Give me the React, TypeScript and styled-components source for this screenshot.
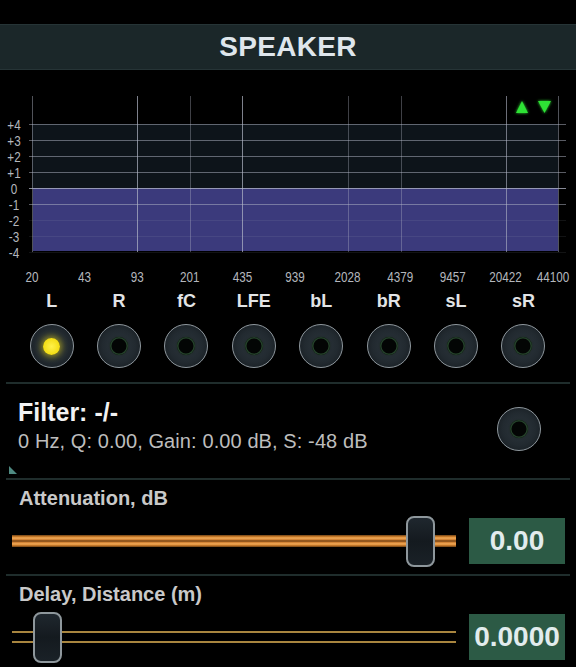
import React from "react";
import styled, { createGlobalStyle } from "styled-components";

const GlobalStyle = createGlobalStyle`
  html, body {
    margin: 0;
    padding: 0;
    background: #000;
  }
  body {
    font-family: "Liberation Sans", Arial, sans-serif;
    color: #ddd;
  }
`;

const CHANNELS = ["L", "R", "fC", "LFE", "bL", "bR", "sL", "sR"];
const FREQS = ["20", "43", "93", "201", "435", "939", "2028", "4379", "9457", "20422", "44100"];
const LEVELS = ["+4", "+3", "+2", "+1", "0", "-1", "-2", "-3", "-4"];
const VLINES = [
  { x: 32, o: 0.45 },
  { x: 137, o: 0.7 },
  { x: 190, o: 0.35 },
  { x: 242, o: 0.7 },
  { x: 348, o: 0.35 },
  { x: 401, o: 0.35 },
  { x: 506, o: 0.6 },
  { x: 558, o: 0.45 },
];

// the axis font in the app is a narrow one, squeeze the regular face
const NARROW = 0.78;

const Label = ({ x, y, children }: { x: number; y: number; children: string }) => (
  <AxisText transform={`translate(${x} ${y}) scale(${NARROW} 1)`} textAnchor="middle">
    {children}
  </AxisText>
);

const EqChart = () => {
  const rowY = (i: number) => 54 + i * 16;
  return (
    <ChartSvg width={576} height={220} viewBox="0 0 576 220">
      <defs>
        <filter id="glow" x="-50%" y="-50%" width="200%" height="200%">
          <feGaussianBlur stdDeviation="1.6" result="b" />
          <feMerge>
            <feMergeNode in="b" />
            <feMergeNode in="SourceGraphic" />
          </feMerge>
        </filter>
      </defs>
      <rect x={32} y={54} width={526} height={64} fill="#0d141a" />
      <rect x={33} y={118} width={525} height={63} fill="#3b3a7c" />
      {VLINES.map((l) => (
        <line key={l.x} x1={l.x + 0.5} x2={l.x + 0.5} y1={26} y2={182} stroke="#b4b8c8" strokeOpacity={l.o} />
      ))}
      {LEVELS.map((lv, i) => (
        <line
          key={lv}
          x1={29}
          x2={566}
          y1={rowY(i) + 0.5}
          y2={rowY(i) + 0.5}
          stroke="#b4b8c8"
          strokeOpacity={i === 4 ? 0.75 : i > 5 ? 0.1 : 0.5}
        />
      ))}
      {LEVELS.map((lv, i) => (
        <Label key={lv} x={14} y={rowY(i) + 5.5}>
          {lv}
        </Label>
      ))}
      {FREQS.map((f, i) => (
        <Label key={f} x={i === 10 ? 553 : 32 + i * 52.6} y={211.5}>
          {f}
        </Label>
      ))}
      <g fill="#2ee234" filter="url(#glow)">
        <polygon points="516,43 528,43 522,31" />
        <polygon points="538,31 551,31 544.5,43" />
      </g>
    </ChartSvg>
  );
};

const Knob = ({ active }: { active?: boolean }) => (
  <KnobRing>
    <KnobCore $active={active} />
  </KnobRing>
);

type SliderProps = {
  label: string;
  value: string;
  pos: number;
  bright?: boolean;
};

const SliderBlock = ({ label, value, pos, bright }: SliderProps) => (
  <Section>
    <SliderLabel>{label}</SliderLabel>
    <SliderRow>
      <Track $bright={bright}>
        <Thumb style={{ left: `${pos * 100}%` }} />
      </Track>
      <ValueBox>{value}</ValueBox>
    </SliderRow>
  </Section>
);

export default function App() {
  return (
    <>
      <GlobalStyle />
      <Page>
        <Header>SPEAKER</Header>
        <EqChart />
        <ChannelGrid>
          {CHANNELS.map((c, i) => (
            <Channel key={c}>
              <ChannelName>{c}</ChannelName>
              <Knob active={i === 0} />
            </Channel>
          ))}
        </ChannelGrid>
        <Divider $top={14} />
        <FilterSection>
          <FilterText>
            <FilterTitle>Filter: -/-</FilterTitle>
            <FilterInfo>0 Hz, Q: 0.00, Gain: 0.00 dB, S: -48 dB</FilterInfo>
            <Corner />
          </FilterText>
          <FilterKnob>
            <Knob />
          </FilterKnob>
        </FilterSection>
        <Divider $top={0} />
        <SliderBlock label="Attenuation, dB" value="0.00" pos={394 / 444} bright />
        <Divider $top={5} />
        <SliderBlock label="Delay, Distance (m)" value="0.0000" pos={21 / 444} />
      </Page>
    </>
  );
}

const Page = styled.div`
  width: 576px;
  height: 667px;
  overflow: hidden;
  padding-top: 24px;
  box-sizing: border-box;
  background: #000;
`;

const Header = styled.div`
  height: 46px;
  box-sizing: border-box;
  display: flex;
  align-items: center;
  justify-content: center;
  background: #1b2729;
  border-top: 1px solid #263436;
  border-bottom: 1px solid #263436;
  color: #dfe6ec;
  font-size: 28px;
  font-weight: bold;
  letter-spacing: 0.3px;
`;

const ChartSvg = styled.svg`
  display: block;
`;

const AxisText = styled.text`
  font-family: "Liberation Sans", Arial, sans-serif;
  font-size: 15px;
  fill: #b4b7bd;
`;

const ChannelGrid = styled.div`
  display: grid;
  grid-template-columns: repeat(8, 67.4px);
  padding-left: 18px;
`;

const Channel = styled.div`
  display: flex;
  flex-direction: column;
  align-items: center;
  gap: 12px;
`;

const ChannelName = styled.div`
  font-size: 18px;
  line-height: 22px;
  font-weight: bold;
  color: #e2e4e6;
`;

const KnobRing = styled.div`
  width: 44px;
  height: 44px;
  box-sizing: border-box;
  border-radius: 50%;
  border: 1.5px solid #8f989e;
  background: radial-gradient(circle at 50% 50%, #2c353c 0%, #222a30 55%, #12171b 100%);
  display: flex;
  align-items: center;
  justify-content: center;
  box-shadow: 0 0 2px rgba(0, 0, 0, 0.8);
`;

const KnobCore = styled.div<{ $active?: boolean }>`
  width: ${(p) => (p.$active ? "17px" : "18px")};
  height: ${(p) => (p.$active ? "17px" : "18px")};
  border-radius: 50%;
  background: ${(p) =>
    p.$active ? "radial-gradient(circle, #fff14a 0%, #f2dc12 70%, #d8c010 100%)" : "#030504"};
  box-shadow: ${(p) =>
    p.$active ? "0 0 6px 2px rgba(240, 220, 20, 0.55)" : "inset 0 0 0 1.5px #24402a, 0 0 2px #1a2a1c"};
`;

const Divider = styled.div<{ $top: number }>`
  margin: ${(p) => p.$top}px 6px 0 6px;
  height: 2px;
  background: #1f2d2c;
`;

const FilterSection = styled.div`
  height: 94px;
  display: flex;
  justify-content: space-between;
  align-items: flex-start;
  padding: 0 35px 0 0;
`;

const FilterText = styled.div`
  display: flex;
  flex-direction: column;
  padding-top: 13px;
  padding-left: 18px;
  height: 100%;
  box-sizing: border-box;
`;

const FilterTitle = styled.div`
  font-size: 25px;
  line-height: 30px;
  font-weight: bold;
  color: #f2f2f2;
`;

const FilterInfo = styled.div`
  margin-top: 2px;
  font-size: 20px;
  line-height: 24px;
  letter-spacing: 0.1px;
  color: #bdbdbd;
`;

const Corner = styled.div`
  margin: 13px 0 0 -9px;
  width: 0;
  height: 0;
  border-bottom: 8px solid #4f8a82;
  border-right: 8px solid transparent;
`;

const FilterKnob = styled.div`
  margin-top: 23px;
`;

const Section = styled.div`
  padding-top: 6px;
`;

const SliderLabel = styled.div`
  padding-left: 19px;
  font-size: 20px;
  line-height: 24px;
  font-weight: bold;
  color: #c9c9c9;
`;

const SliderRow = styled.div`
  margin-top: 3px;
  height: 56px;
  display: flex;
  align-items: center;
  gap: 13px;
  padding-left: 12px;
`;

const Track = styled.div<{ $bright?: boolean }>`
  position: relative;
  width: 444px;
  height: 12px;
  box-sizing: border-box;
  ${(p) =>
    p.$bright
      ? `background: linear-gradient(to bottom, #6e4216 0px, #d9862f 2px, #f3ad5c 3px, #c8772a 5px, #5c3612 6px, #c8772a 7px, #f3ad5c 9px, #d9862f 10px, #6e4216 12px);`
      : `border-top: 2px solid #a8853f; border-bottom: 2px solid #a8853f; background: transparent;`}
`;

const Thumb = styled.div`
  position: absolute;
  top: 50%;
  width: 29px;
  height: 51px;
  margin-top: -25.5px;
  box-sizing: border-box;
  border: 2px solid #8e979c;
  border-radius: 8px;
  background: linear-gradient(to bottom, #1f272e, #141a1f 50%, #1a2127);
`;

const ValueBox = styled.div`
  width: 96px;
  height: 46px;
  background: #2c5a45;
  color: #e2eced;
  font-size: 28px;
  font-weight: bold;
  display: flex;
  align-items: center;
  justify-content: center;
`;
